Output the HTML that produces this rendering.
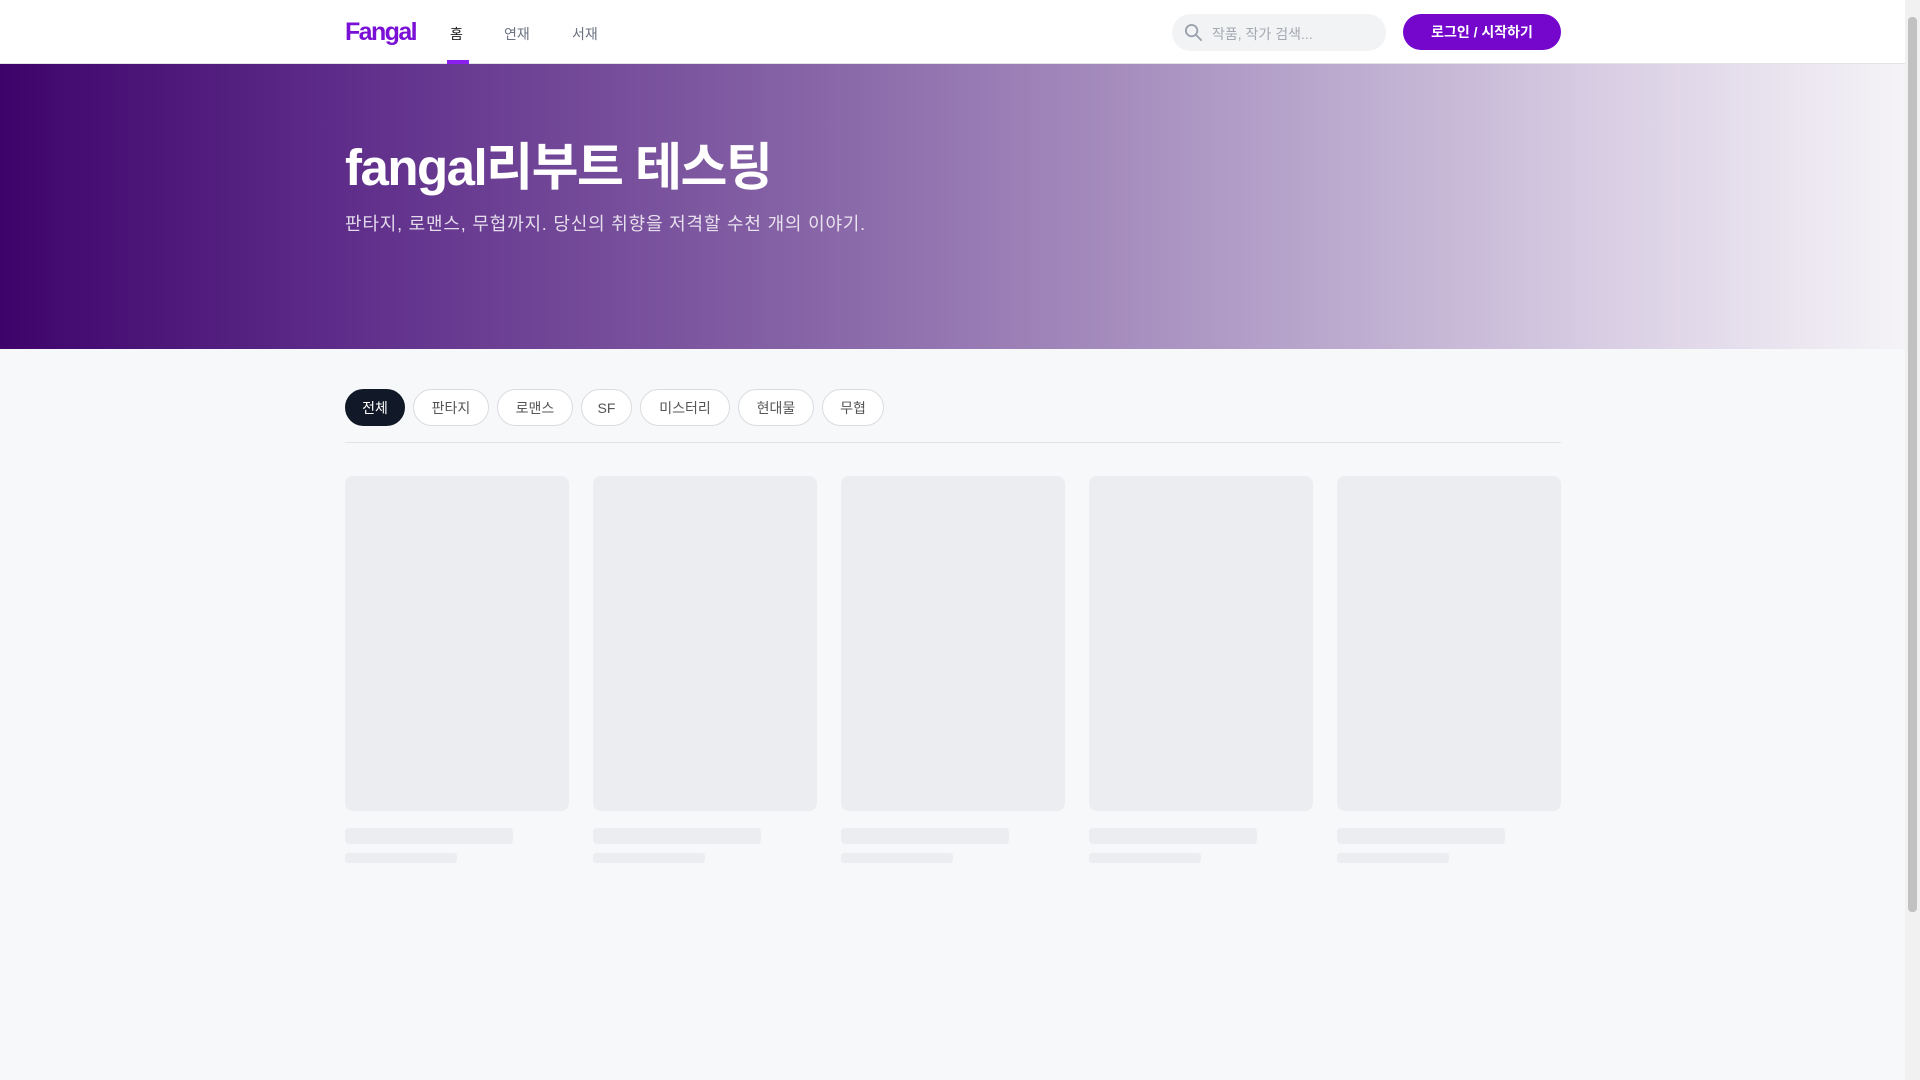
<!DOCTYPE html>
<html lang="ko"><head><meta charset="utf-8">
<style>
*{margin:0;padding:0;box-sizing:border-box}
html,body{width:1920px;height:1080px;overflow:hidden}
body{background:#f7f8fa;font-family:"Liberation Sans","Noto Sans CJK KR",sans-serif;position:relative}
.header{position:absolute;left:0;top:0;width:1905px;height:64px;background:#fff;border-bottom:1px solid #e3e3e6}
.logo{position:absolute;left:345px;top:18px;font-size:25px;font-weight:700;color:#7a0fd6;letter-spacing:-1.6px}
.nav{position:absolute;top:24px;font-size:14px;color:#6b7280}
.nav.active{color:#222}
.uline{position:absolute;left:447px;top:60px;width:22px;height:4px;background:#8a1ff0}
.search{position:absolute;left:1172px;top:14px;width:214px;height:37px;border-radius:19px;background:#f2f3f5}
.search span{position:absolute;left:40px;top:10px;font-size:14px;color:#a4a8b0}
.btn{position:absolute;left:1403px;top:14px;width:158px;height:36px;border-radius:18px;background:#7506cc;color:#fff;font-size:14px;font-weight:700;text-align:center;line-height:36px}
.hero{position:absolute;left:0;top:64px;width:1905px;height:285px;background:linear-gradient(90deg,#3e036a 0%,#5e2d8a 18%,#8663a6 42%,#b39fc8 66%,#dcd2e6 86%,#f5f3f7 100%)}
.hero h1{position:absolute;left:345px;top:62px;font-size:51px;font-weight:700;color:#fff;letter-spacing:-1.5px}
.hero p{position:absolute;left:345px;top:146px;font-size:18px;color:rgba(255,255,255,.82);letter-spacing:0.8px}
.chip{position:absolute;top:389px;height:37px;border:1px solid #dadce0;border-radius:19px;background:#fff;font-size:14px;color:#555;text-align:center;line-height:37px}
.chip.on{background:#111827;color:#fff;border-color:#111827}
.hr{position:absolute;left:345px;top:442px;width:1216px;height:1px;background:#e2e3e6}
.card{position:absolute;top:476px;width:224px;height:335px;border-radius:8px;background:#ecedf0}
.b1{position:absolute;top:828px;width:168px;height:16px;border-radius:4px;background:#ecedf0}
.b2{position:absolute;top:853px;width:112px;height:10px;border-radius:3px;background:#ecedf0}
.sb{position:absolute;right:0;top:0;width:15px;height:1080px;background:#f1f1f1}
.sb div{position:absolute;left:3px;top:17px;width:9px;height:895px;background:#c1c1c1;border-radius:4px}
</style></head><body>
<div class="header">
<div class="logo">Fangal</div>
<div class="nav active" style="left:450px">홈</div>
<div class="nav" style="left:504px">연재</div>
<div class="nav" style="left:572px">서재</div>
<div class="uline"></div>
<div class="search"><svg style="position:absolute;left:12px;top:9px" width="19" height="19" viewBox="0 0 20 20"><circle cx="8" cy="8" r="6" fill="none" stroke="#9ca3af" stroke-width="2"/><path d="M12.5 12.5 L18 18" stroke="#9ca3af" stroke-width="2" stroke-linecap="round"/></svg><span>작품, 작가 검색...</span></div>
<div class="btn">로그인 / 시작하기</div>
</div>
<div class="hero"><h1>fangal리부트 테스팅</h1><p>판타지, 로맨스, 무협까지. 당신의 취향을 저격할 수천 개의 이야기.</p></div>
<div class="chip on" style="left:345px;width:60px">전체</div>
<div class="chip" style="left:413px;width:76px">판타지</div>
<div class="chip" style="left:497px;width:76px">로맨스</div>
<div class="chip" style="left:581px;width:51px">SF</div>
<div class="chip" style="left:640px;width:90px">미스터리</div>
<div class="chip" style="left:738px;width:76px">현대물</div>
<div class="chip" style="left:822px;width:62px">무협</div>
<div class="hr"></div>
<div class="card" style="left:345px"></div><div class="b1" style="left:345px"></div><div class="b2" style="left:345px"></div>
<div class="card" style="left:593px"></div><div class="b1" style="left:593px"></div><div class="b2" style="left:593px"></div>
<div class="card" style="left:841px"></div><div class="b1" style="left:841px"></div><div class="b2" style="left:841px"></div>
<div class="card" style="left:1089px"></div><div class="b1" style="left:1089px"></div><div class="b2" style="left:1089px"></div>
<div class="card" style="left:1337px"></div><div class="b1" style="left:1337px"></div><div class="b2" style="left:1337px"></div>
<div class="sb"><div></div></div>
</body></html>
